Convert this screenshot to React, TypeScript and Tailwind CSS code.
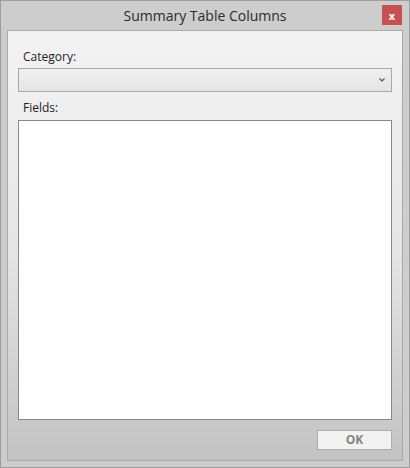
export default function App() {
    return (
        <div className="flex h-[468px] w-[410px] flex-col border border-[#9d9d9d] bg-[#cdcdcd] font-['Open_Sans',sans-serif]">
            <div className="relative flex h-[29px] shrink-0 items-center justify-center">
                <span className="text-[14px] leading-none text-[#2b2b2b]">Summary Table Columns</span>
                <button className="absolute right-[7px] top-[4px] flex h-[20px] w-[20px] items-center justify-center bg-[#c75050] text-[11px] font-bold leading-none text-white">
                    x
                </button>
            </div>
            <div className="mx-[6px] mb-[6px] flex flex-1 flex-col border border-[#a9a9a9] bg-gradient-to-b from-[#f3f3f3] via-[#e6e6e6] to-[#c3c3c3] px-[10px]">
                <label className="mt-[16px] h-[20px] pl-[5px] text-[12px] leading-[20px] text-[#1e1e1e]">Category:</label>
                <div className="mt-[1px] flex h-[24px] items-center justify-end border border-[#a8a8a8] bg-gradient-to-b from-[#f0f0f0] to-[#e4e4e4] pr-[6px]">
                    <svg width="6" height="4" viewBox="0 0 6 4" className="text-[#555]">
                        <path d="M0.5 0.5 L3 3 L5.5 0.5" stroke="currentColor" strokeWidth="1.2" fill="none" />
                    </svg>
                </div>
                <label className="mt-[6px] h-[20px] pl-[5px] text-[12px] leading-[20px] text-[#1e1e1e]">Fields:</label>
                <div className="mt-[2px] h-[300px] border border-[#828790] bg-white"></div>
                <div className="mt-[10px] flex justify-end">
                    <button className="h-[20px] w-[75px] border border-[#adadad] bg-[#f2f2f2] text-[12px] font-bold leading-none text-[#838383]">
                        OK
                    </button>
                </div>
            </div>
        </div>
    )
}
